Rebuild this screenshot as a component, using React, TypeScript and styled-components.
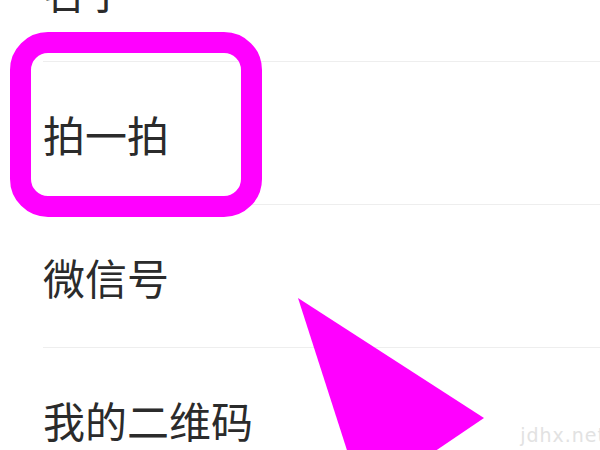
import React from 'react'
import styled, { createGlobalStyle } from 'styled-components'

const GlobalStyle = createGlobalStyle`
  html, body {
    margin: 0;
    padding: 0;
    background: #fff;
  }
  body {
    font-family: "Noto Sans CJK SC", "Noto Sans", sans-serif;
  }
`

const Page = styled.div`
  position: relative;
  width: 600px;
  height: 450px;
  overflow: hidden;
  background: #fff;
`

const List = styled.div`
  display: flex;
  flex-direction: column;
  margin-top: -81px;
`

const Row = styled.div`
  position: relative;
  padding-left: 43px;
`

const Cell = styled.div<{ $last?: boolean }>`
  height: 142px;
  display: flex;
  align-items: center;
  border-bottom: 1px solid ${(p) => (p.$last ? 'transparent' : '#eeeeee')};
  font-size: 42px;
  color: #2b2b2b;
  letter-spacing: 0;
`

const Highlight = styled.div`
  position: absolute;
  left: 10px;
  top: -30px;
  width: 252px;
  height: 185px;
  box-sizing: border-box;
  border: 21px solid #ff00ff;
  border-radius: 38px;
  pointer-events: none;
`

const Arrow = styled.svg`
  position: absolute;
  left: 0;
  top: 0;
  pointer-events: none;
`

const Watermark = styled.div`
  position: absolute;
  right: -6px;
  bottom: 4px;
  font-family: "DejaVu Sans", sans-serif;
  font-size: 19px;
  color: #e2e2e2;
  letter-spacing: 1px;
`

const items = ['名字', '拍一拍', '微信号', '我的二维码']

const App = () => {
  return (
    <Page>
      <GlobalStyle />
      <List>
        {items.map((item, i) => (
          <Row key={item}>
            <Cell $last={i === items.length - 1}>{item}</Cell>
            {item === '拍一拍' && <Highlight />}
          </Row>
        ))}
      </List>
      <Arrow width="600" height="450" viewBox="0 0 600 450">
        <polygon points="298,298 484,418 363,500" fill="#ff00ff" />
      </Arrow>
      <Watermark>jdhx.net</Watermark>
    </Page>
  )
}

export default App
